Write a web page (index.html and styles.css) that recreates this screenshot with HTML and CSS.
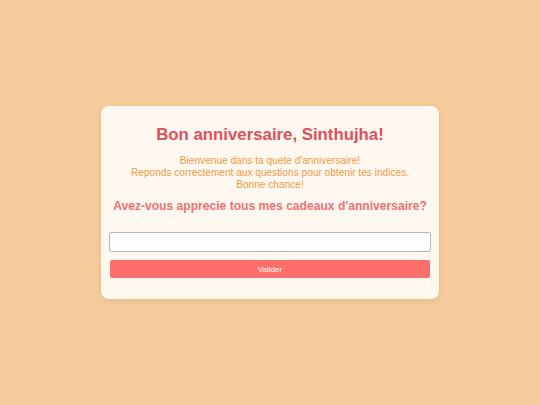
FILE: index.html
```html
<!DOCTYPE html>
<html lang="fr">
<head>
<meta charset="utf-8">
<link rel="stylesheet" href="styles.css">
</head>
<body>
<div class="card">
  <h1 class="title">Bon anniversaire, Sinthujha!</h1>
  <p class="intro">Bienvenue dans ta quete d'anniversaire!<br>Reponds correctement aux questions pour obtenir tes indices.<br>Bonne chance!</p>
  <h2 class="question">Avez-vous apprecie tous mes cadeaux d'anniversaire?</h2>
  <input class="answer" type="text">
  <button class="submit">Valider</button>
</div>
</body>
</html>
```

FILE: styles.css
```css
html, body {
  margin: 0;
  height: 100%;
}
body {
  background: #f6cb9a;
  font-family: "Liberation Sans", Arial, sans-serif;
  display: flex;
  align-items: center;
  justify-content: center;
}
.card {
  width: 320px;
  padding: 19px 9px 21px;
  background: #fff8f1;
  border-radius: 8px;
  box-shadow: 0 2px 6px rgba(0,0,0,0.08);
  display: flex;
  flex-direction: column;
  text-align: center;
}
.title {
  margin: 0 0 10px;
  font-size: 16.8px;
  color: #e0505a;
}
.intro {
  margin: 0 0 8px;
  font-size: 10.15px;
  line-height: 12px;
  color: #f29a42;
}
.question {
  margin: 0 0 19px;
  font-size: 12.1px;
  white-space: nowrap;
  color: #f07070;
}
.answer {
  box-sizing: border-box;
  height: 20px;
  margin: 0 -1px 8px;
  border: 1px solid #b8b8b8;
  border-radius: 2px;
  background: #fff;
}
.submit {
  height: 18px;
  border: none;
  border-radius: 2px;
  background: #ff6f69;
  color: #fff;
  font-family: "Liberation Sans", Arial, sans-serif;
  font-size: 8px;
}
```
